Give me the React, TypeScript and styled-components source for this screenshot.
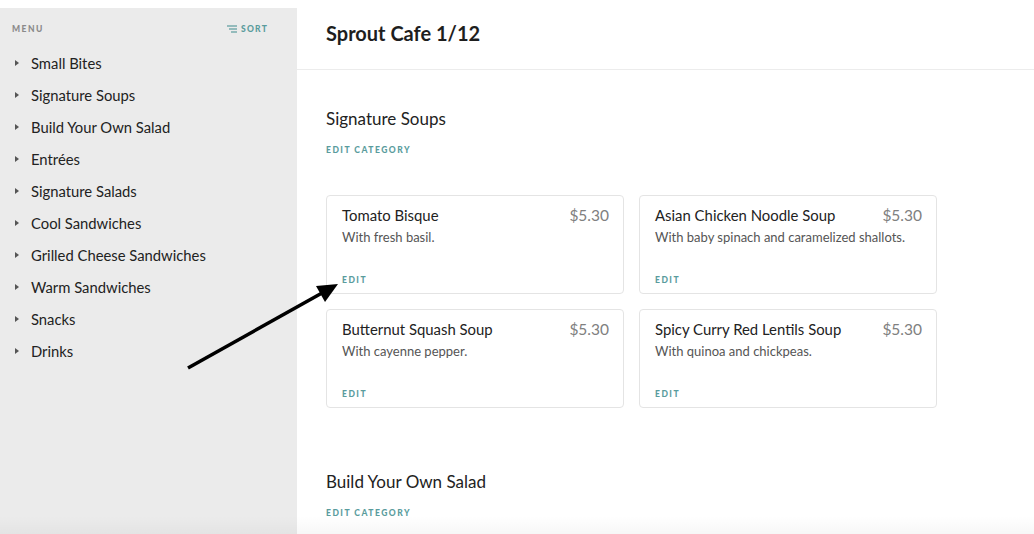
import React from "react";
import styled, { createGlobalStyle } from "styled-components";

const GlobalStyle = createGlobalStyle`
  html, body { margin: 0; padding: 0; background: #ffffff; }
  body { font-family: Lato, "Open Sans", Arial, sans-serif; color: #222; overflow: hidden; }
  * { box-sizing: border-box; }
`;

const Page = styled.div`
  position: relative;
  display: flex;
  width: 1034px;
  height: 534px;
  overflow: hidden;
  background: #fff;
`;

const Sidebar = styled.aside`
  width: 297px;
  flex-shrink: 0;
  margin-top: 8px;
  background: #ebebeb;
  padding: 15px 29px 0 12px;
`;

const SideHeader = styled.div`
  display: flex;
  justify-content: space-between;
  align-items: center;
  height: 12px;
  margin-bottom: 12px;
`;

const MenuLabel = styled.span`
  font-size: 8.5px;
  font-weight: 900;
  letter-spacing: 1.5px;
  color: #8a8a8a;
`;

const SortButton = styled.span`
  display: flex;
  align-items: center;
  gap: 4px;
  font-size: 8.5px;
  font-weight: 900;
  letter-spacing: 1.2px;
  color: #5a9c9d;
`;

const MenuList = styled.ul`
  list-style: none;
  margin: 0;
  padding: 0;
`;

const MenuItem = styled.li`
  display: flex;
  align-items: center;
  height: 32px;
  font-size: 14.8px;
  color: #222;
`;

const Caret = styled.span`
  width: 0;
  height: 0;
  margin: 0 12px 0 3px;
  border-top: 3.5px solid transparent;
  border-bottom: 3.5px solid transparent;
  border-left: 4px solid #555;
`;

const Main = styled.main`
  flex: 1;
  min-width: 0;
`;

const Header = styled.header`
  height: 70px;
  display: flex;
  align-items: center;
  padding: 0 29px 4px;
  border-bottom: 1px solid #ececec;
`;

const Title = styled.h1`
  margin: 0;
  font-size: 20px;
  font-weight: 700;
  color: #1e1e1e;
`;

const Section = styled.section`
  padding: 39px 29px 25px;
`;

const SectionTitle = styled.h2`
  margin: 0;
  font-size: 17px;
  line-height: 20px;
  font-weight: 400;
  color: #222;
`;

const ActionLink = styled.span`
  display: block;
  font-size: 8.5px;
  line-height: 12px;
  font-weight: 900;
  letter-spacing: 1.5px;
  color: #5a9c9d;
`;

const CategoryLink = styled(ActionLink)`
  margin-top: 15px;
`;

const CardGrid = styled.div`
  display: grid;
  grid-template-columns: repeat(2, 298px);
  gap: 15px;
  margin-top: 39px;
`;

const Card = styled.div`
  height: 99px;
  border: 1px solid #e4e4e4;
  border-radius: 4px;
  padding: 11px 14px 7px 15px;
  display: flex;
  flex-direction: column;
`;

const CardTop = styled.div`
  display: flex;
  justify-content: space-between;
  align-items: flex-start;
`;

const ItemName = styled.div`
  font-size: 14.9px;
  line-height: 16px;
  color: #222;
`;

const Price = styled.div`
  font-size: 15.5px;
  line-height: 12px;
  margin-top: 2px;
  color: #808080;
`;

const Desc = styled.div`
  margin-top: 6px;
  font-size: 13px;
  line-height: 16px;
  color: #555;
`;

const EditLink = styled(ActionLink)`
  margin-top: auto;
`;

const BottomFade = styled.div`
  position: absolute;
  left: 0;
  right: 0;
  bottom: 0;
  height: 18px;
  background: linear-gradient(to bottom, rgba(0, 0, 0, 0), rgba(0, 0, 0, 0.03));
  pointer-events: none;
`;

const ArrowOverlay = styled.svg`
  position: absolute;
  left: 0;
  top: 0;
  pointer-events: none;
`;

const categories = [
  "Small Bites",
  "Signature Soups",
  "Build Your Own Salad",
  "Entrées",
  "Signature Salads",
  "Cool Sandwiches",
  "Grilled Cheese Sandwiches",
  "Warm Sandwiches",
  "Snacks",
  "Drinks",
];

const soups = [
  { name: "Tomato Bisque", desc: "With fresh basil.", price: "$5.30" },
  { name: "Asian Chicken Noodle Soup", desc: "With baby spinach and caramelized shallots.", price: "$5.30" },
  { name: "Butternut Squash Soup", desc: "With cayenne pepper.", price: "$5.30" },
  { name: "Spicy Curry Red Lentils Soup", desc: "With quinoa and chickpeas.", price: "$5.30" },
];

const SortIcon = () => (
  <svg width="10" height="8" viewBox="0 0 10 8" fill="none" stroke="#5a9c9d" strokeWidth="1.2">
    <line x1="0" y1="1" x2="10" y2="1" />
    <line x1="2" y1="4" x2="10" y2="4" />
    <line x1="4" y1="7" x2="10" y2="7" />
  </svg>
);

export default function App() {
  return (
    <>
      <GlobalStyle />
      <Page>
        <Sidebar>
          <SideHeader>
            <MenuLabel>MENU</MenuLabel>
            <SortButton>
              <SortIcon />
              SORT
            </SortButton>
          </SideHeader>
          <MenuList>
            {categories.map((c) => (
              <MenuItem key={c}>
                <Caret />
                {c}
              </MenuItem>
            ))}
          </MenuList>
        </Sidebar>
        <Main>
          <Header>
            <Title>Sprout Cafe 1/12</Title>
          </Header>
          <Section>
            <SectionTitle>Signature Soups</SectionTitle>
            <CategoryLink>EDIT CATEGORY</CategoryLink>
            <CardGrid>
              {soups.map((s) => (
                <Card key={s.name}>
                  <CardTop>
                    <ItemName>{s.name}</ItemName>
                    <Price>{s.price}</Price>
                  </CardTop>
                  <Desc>{s.desc}</Desc>
                  <EditLink>EDIT</EditLink>
                </Card>
              ))}
            </CardGrid>
          </Section>
          <Section>
            <SectionTitle>Build Your Own Salad</SectionTitle>
            <CategoryLink>EDIT CATEGORY</CategoryLink>
          </Section>
        </Main>
        <BottomFade />
        <ArrowOverlay width="1034" height="534" viewBox="0 0 1034 534">
          <line x1="188" y1="368" x2="322" y2="293" stroke="#000" strokeWidth="3.6" />
          <polygon points="338,284 316,286 325,302" fill="#000" />
        </ArrowOverlay>
      </Page>
    </>
  );
}
